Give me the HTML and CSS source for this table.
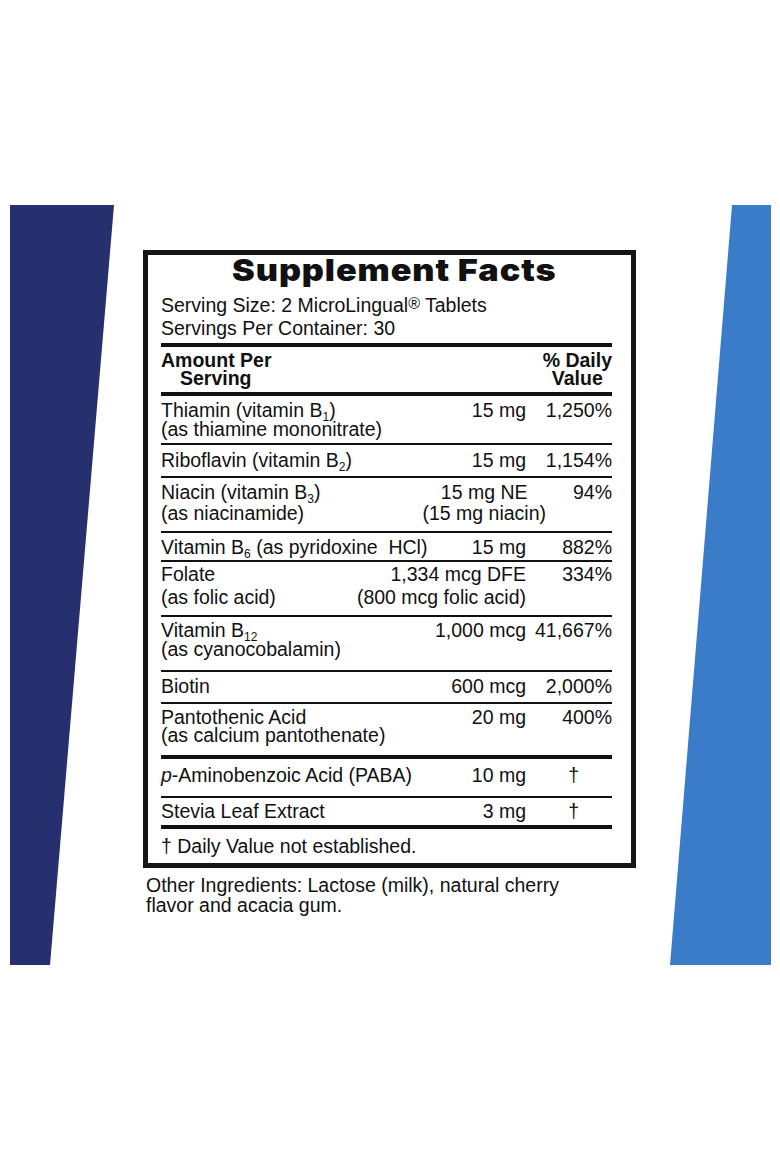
FILE: index.html
```html
<!DOCTYPE html>
<html lang="en">
<head>
<meta charset="utf-8">
<title>Supplement Facts</title>
<link rel="stylesheet" href="styles.css">
</head>
<body>
<div class="stage">
  <div class="band band-left"></div>
  <main class="panel">
    <section class="facts">
      <h1 class="title"><span class="title-text">Supplement Facts</span></h1>
      <div class="serving">
        <div>Serving Size: 2 MicroLingual<sup class="reg">®</sup> Tablets</div>
        <div>Servings Per Container: 30</div>
      </div>
      <div class="head">
        <div class="head-left"><span>Amount Per</span><span class="indent">Serving</span></div>
        <div class="head-right"><span>% Daily</span><span>Value</span></div>
      </div>
      <div class="row r-thiamin">
        <div class="name">Thiamin (vitamin B<sub>1</sub>)<br>(as thiamine mononitrate)</div>
        <div class="amt">15 mg</div>
        <div class="dv">1,250%</div>
      </div>
      <div class="row r-ribo">
        <div class="name">Riboflavin (vitamin B<sub>2</sub>)</div>
        <div class="amt">15 mg</div>
        <div class="dv">1,154%</div>
      </div>
      <div class="row r-niacin">
        <div class="name">Niacin (vitamin B<sub>3</sub>)<br>(as niacinamide)</div>
        <div class="amt amt-center">15 mg NE<br>(15 mg niacin)</div>
        <div class="dv">94%</div>
      </div>
      <div class="row r-b6">
        <div class="name">Vitamin B<sub>6</sub> (as pyridoxine&nbsp; HCl)</div>
        <div class="amt">15 mg</div>
        <div class="dv">882%</div>
      </div>
      <div class="row r-folate">
        <div class="name">Folate<br>(as folic acid)</div>
        <div class="amt">1,334 mcg DFE<br>(800 mcg folic acid)</div>
        <div class="dv">334%</div>
      </div>
      <div class="row r-b12">
        <div class="name">Vitamin B<sub>12</sub><br>(as cyanocobalamin)</div>
        <div class="amt">1,000 mcg</div>
        <div class="dv">41,667%</div>
      </div>
      <div class="row r-biotin">
        <div class="name">Biotin</div>
        <div class="amt">600 mcg</div>
        <div class="dv">2,000%</div>
      </div>
      <div class="row r-panto thick">
        <div class="name">Pantothenic Acid<br>(as calcium pantothenate)</div>
        <div class="amt">20 mg</div>
        <div class="dv">400%</div>
      </div>
      <div class="row r-paba">
        <div class="name"><i>p</i>-Aminobenzoic Acid (PABA)</div>
        <div class="amt">10 mg</div>
        <div class="dv dag">†</div>
      </div>
      <div class="row r-stevia thick">
        <div class="name">Stevia Leaf Extract</div>
        <div class="amt">3 mg</div>
        <div class="dv dag">†</div>
      </div>
      <div class="foot">† Daily Value not established.</div>
    </section>
    <p class="ingredients">Other Ingredients: Lactose (milk), natural cherry<br>flavor and acacia gum.</p>
  </main>
  <div class="band band-right"></div>
</div>
</body>
</html>
```
FILE: styles.css
```css
* { box-sizing: border-box; }

html, body {
  margin: 0;
  padding: 0;
  background: #ffffff;
}

body {
  font-family: "Liberation Sans", Arial, sans-serif;
  font-size: 19.5px;
  color: #111;
}

.stage {
  display: flex;
  align-items: flex-start;
  padding: 205px 0 0 10px;
}

.band {
  flex: none;
  height: 760px;
}

.band-left {
  width: 104px;
  background: #27306e;
  clip-path: polygon(0 0, 100% 0, 40px 100%, 0 100%);
}

.band-right {
  width: 101px;
  background: #3a7cc8;
  clip-path: polygon(62px 0, 100% 0, 100% 100%, 0 100%);
}

.panel {
  flex: none;
  width: 493px;
  margin: 45px 34px 0 29px;
}

.facts {
  border: 5px solid #161616;
  padding: 0 19px 0 13px;
}

.title {
  margin: 0;
  font-family: "Inter", "DejaVu Sans", sans-serif;
  font-weight: 900;
  font-size: 30px;
  line-height: 30px;
  text-align: center;
  padding-left: 16px;
  color: #111;
}

.title-text {
  display: inline-block;
  letter-spacing: 0.8px;
  transform: scaleX(1.14);
}

.serving {
  margin-top: 9px;
  line-height: 22.5px;
  padding-bottom: 4px;
  border-bottom: 4px solid #111;
}

.reg {
  font-size: 16px;
  line-height: 0;
  vertical-align: 3px;
}

.head {
  display: flex;
  justify-content: space-between;
  font-weight: 700;
  line-height: 18.5px;
  padding: 3.7px 0 4px;
  border-bottom: 4px solid #111;
}

.head-left span,
.head-right span {
  display: block;
}

.head-left .indent {
  padding-left: 19px;
}

.head-right {
  text-align: center;
}

.row {
  display: flex;
  align-items: flex-start;
  border-bottom: 2px solid #111;
  line-height: 20px;
}

.row.thick {
  border-bottom-width: 4px;
}

.name {
  flex: 1;
  white-space: nowrap;
}

.amt {
  flex: none;
  text-align: right;
  white-space: nowrap;
}

.amt-center {
  text-align: center;
  margin-right: -20px;
}

.dv {
  flex: none;
  width: 86px;
  text-align: right;
  white-space: nowrap;
}

.dv.dag {
  padding-right: 33px;
}

sub {
  font-size: 12px;
  line-height: 0;
  vertical-align: -4px;
}

.r-thiamin { padding: 5.5px 0 4.7px; line-height: 18.7px; }
.r-ribo    { padding: 4.6px 0 6.1px; }
.r-niacin  { padding: 3.8px 0 6px; line-height: 21.4px; }
.r-b6      { padding: 4.5px 0 2.8px; }
.r-folate  { padding: 1.6px 0 6.2px; line-height: 22.6px; }
.r-b12     { padding: 4.4px 0 10.6px; line-height: 19px; }
.r-biotin  { padding: 4.5px 0 6px; }
.r-panto   { padding: 4.9px 0 10.2px; line-height: 17.7px; }
.r-paba    { padding: 5.9px 0 10.8px; }
.r-stevia  { padding: 3.8px 0 4.2px; }

.foot {
  line-height: 20px;
  padding: 6.5px 0 7.5px;
}

.ingredients {
  margin: 7.7px 0 0 3px;
  line-height: 19.7px;
}
```
